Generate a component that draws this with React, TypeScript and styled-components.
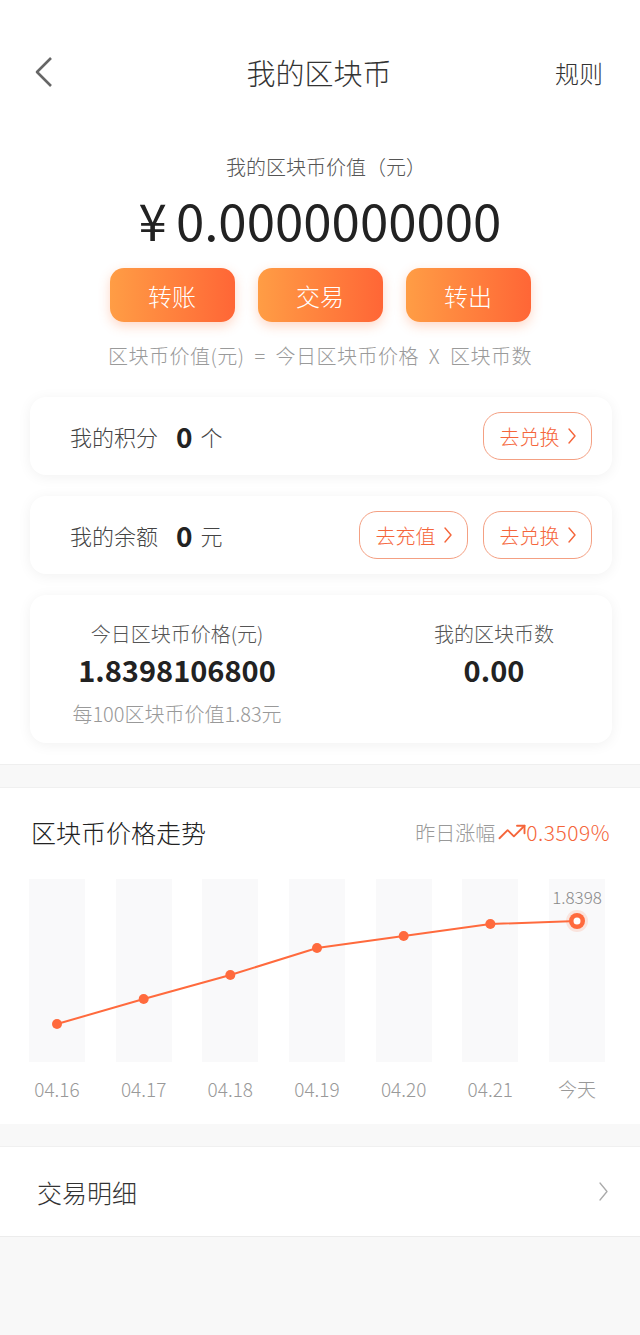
import React from "react";
import styled, { createGlobalStyle } from "styled-components";
import { TrendingUp } from "lucide-react";

const GlobalStyle = createGlobalStyle`
  html, body {
    margin: 0;
    padding: 0;
  }
  body {
    font-family: "Noto Sans CJK SC", "Noto Sans", sans-serif;
    font-weight: 300;
    background: #f8f8f8;
  }
  * {
    box-sizing: border-box;
  }
`;

const ORANGE = "#f5653a";

const points = [145, 120, 96, 69, 57, 45, 42];
const dates = ["04.16", "04.17", "04.18", "04.19", "04.20", "04.21", "今天"];
const PITCH = 86.67;

const Page = styled.div`
  width: 640px;
  min-height: 1335px;
  background: #f8f8f8;
`;

const TopArea = styled.div`
  background: #fff;
  padding-bottom: 21px;
  border-bottom: 1px solid #efefef;
`;

const NavBar = styled.header`
  height: 144px;
  display: grid;
  grid-template-columns: 1fr auto 1fr;
  align-items: center;
  padding: 0 37px 0 35px;
`;

const Title = styled.h1`
  margin: 0;
  font-size: 29px;
  font-weight: 300;
  color: #333;
`;

const RuleLink = styled.span`
  justify-self: end;
  font-size: 24px;
  color: #333;
`;

const Summary = styled.section`
  display: flex;
  flex-direction: column;
  align-items: center;
  padding-top: 9px;
`;

const ValueLabel = styled.div`
  font-size: 20px;
  line-height: 28px;
  color: #555;
  margin-left: 12px;
`;

const Amount = styled.div`
  margin-top: 8px;
  font-size: 51px;
  font-weight: 400;
  line-height: 60px;
  color: #222;
  display: flex;
  align-items: center;

  span {
    margin-right: 9px;
  }
`;

const ActionRow = styled.div`
  display: flex;
  gap: 23px;
  margin-top: 19px;
`;

const ActionButton = styled.button`
  width: 125px;
  height: 54px;
  border: none;
  border-radius: 14px;
  background: linear-gradient(90deg, #ff9d45, #ff6636);
  box-shadow: 0 4px 12px rgba(255, 110, 50, 0.28);
  color: #fff;
  font-family: inherit;
  font-weight: 300;
  font-size: 24px;
  padding: 0;
`;

const Formula = styled.div`
  margin-top: 20px;
  font-size: 20px;
  line-height: 28px;
  letter-spacing: 0.5px;
  color: #9a9a9a;
`;

const Cards = styled.div`
  display: flex;
  flex-direction: column;
  gap: 21px;
  margin: 27px 28px 0 30px;
`;

const Card = styled.div`
  background: #fff;
  border-radius: 16px;
  box-shadow: 0 2px 14px rgba(0, 0, 0, 0.06);
`;

const InfoCard = styled(Card)`
  height: 78px;
  display: flex;
  align-items: center;
  justify-content: space-between;
  padding: 0 20px 0 40px;
`;

const InfoLabel = styled.div`
  display: flex;
  align-items: center;
  font-size: 22px;
  color: #444;

  strong {
    font-size: 28px;
    font-weight: 700;
    color: #222;
    margin: 0 8px 0 18px;
    line-height: 1;
  }
`;

const PillGroup = styled.div`
  display: flex;
  gap: 15px;
`;

const Pill = styled.button`
  height: 48px;
  width: 109px;
  display: flex;
  align-items: center;
  justify-content: center;
  gap: 8px;
  border: 1px solid #f4a083;
  border-radius: 18px;
  background: #fff;
  color: ${ORANGE};
  font-family: inherit;
  font-weight: 300;
  font-size: 20px;
  padding: 0;
`;

const StatsCard = styled(Card)`
  display: grid;
  grid-template-columns: 294px 1fr;
  padding: 25px 0 16px;
`;

const StatCol = styled.div<{ $offset?: number }>`
  display: flex;
  flex-direction: column;
  align-items: center;
  padding-left: ${(p) => p.$offset ?? 0}px;
`;

const StatLabel = styled.div`
  font-size: 20px;
  line-height: 28px;
  color: #555;
`;

const StatValue = styled.div`
  margin-top: 2px;
  font-size: 29px;
  line-height: 38px;
  font-weight: 700;
  color: #222;
`;

const StatNote = styled.div`
  margin-top: 13px;
  font-size: 20px;
  line-height: 26px;
  color: #999;
`;

const ChartSection = styled.section`
  margin-top: 22px;
  background: #fff;
  border-top: 1px solid #f0f0f0;
  padding: 27px 30px 22px 29px;
`;

const ChartHead = styled.div`
  display: flex;
  align-items: center;
  justify-content: space-between;
`;

const ChartTitle = styled.h2`
  margin: 0 0 0 2px;
  font-size: 25px;
  line-height: 34px;
  font-weight: 300;
  color: #222;
`;

const Change = styled.div`
  display: flex;
  align-items: center;
  font-size: 20px;
  color: #999;

  svg {
    margin: 0 -1px 0 2px;
  }

  b {
    font-weight: 300;
    font-size: 21px;
    letter-spacing: 0.5px;
    color: ${ORANGE};
  }
`;

const Plot = styled.div`
  position: relative;
  margin: 30px 5px 0 0;
  height: 183px;
  display: flex;
  justify-content: space-between;
`;

const Bar = styled.div`
  width: 56px;
  height: 100%;
  background: #f9f9fa;
`;

const Overlay = styled.svg`
  position: absolute;
  left: 0;
  top: 0;
`;

const PeakLabel = styled.span`
  position: absolute;
  top: 8px;
  transform: translateX(-50%);
  font-size: 17px;
  line-height: 20px;
  color: #888;
`;

const Axis = styled.div`
  display: flex;
  justify-content: space-between;
  margin: 14px 5px 0 0;
`;

const AxisLabel = styled.span`
  width: 56px;
  text-align: center;
  font-size: 19px;
  line-height: 26px;
  color: #999;
  white-space: nowrap;
`;

const DetailRow = styled.div`
  margin-top: 22px;
  height: 91px;
  background: #fff;
  border-top: 1px solid #f0f0f0;
  border-bottom: 1px solid #ececec;
  display: flex;
  align-items: center;
  justify-content: space-between;
  padding: 0 32px 0 37px;
  font-size: 25px;
  color: #333;
`;

function Chevron({ color, w, h, sw }: { color: string; w: number; h: number; sw: number }) {
  return (
    <svg width={w} height={h} viewBox={`0 0 ${w} ${h}`} fill="none">
      <polyline
        points={`1,1 ${w - 1},${h / 2} 1,${h - 1}`}
        stroke={color}
        strokeWidth={sw}
        strokeLinecap="round"
        strokeLinejoin="round"
      />
    </svg>
  );
}

export default function App() {
  const coords = points.map((y, i) => [28 + i * PITCH, y]);
  const last = coords[coords.length - 1];

  return (
    <Page>
      <GlobalStyle />
      <TopArea>
        <NavBar>
          <svg width="18" height="32" viewBox="0 0 18 32" fill="none">
            <polyline points="16,2 2,16 16,30" stroke="#666" strokeWidth="2.6" strokeLinejoin="round" />
          </svg>
          <Title>我的区块币</Title>
          <RuleLink>规则</RuleLink>
        </NavBar>

        <Summary>
          <ValueLabel>我的区块币价值（元）</ValueLabel>
          <Amount>
            <span>¥</span>0.0000000000
          </Amount>
          <ActionRow>
            <ActionButton>转账</ActionButton>
            <ActionButton>交易</ActionButton>
            <ActionButton>转出</ActionButton>
          </ActionRow>
          <Formula>区块币价值(元) &nbsp;=&nbsp; 今日区块币价格 &nbsp;X&nbsp; 区块币数</Formula>
        </Summary>

        <Cards>
          <InfoCard>
            <InfoLabel>
              我的积分<strong>0</strong>个
            </InfoLabel>
            <PillGroup>
              <Pill>
                去兑换
                <Chevron color={ORANGE} w={8} h={16} sw={1.4} />
              </Pill>
            </PillGroup>
          </InfoCard>
          <InfoCard>
            <InfoLabel>
              我的余额<strong>0</strong>元
            </InfoLabel>
            <PillGroup>
              <Pill>
                去充值
                <Chevron color={ORANGE} w={8} h={16} sw={1.4} />
              </Pill>
              <Pill>
                去兑换
                <Chevron color={ORANGE} w={8} h={16} sw={1.4} />
              </Pill>
            </PillGroup>
          </InfoCard>
          <StatsCard>
            <StatCol>
              <StatLabel>今日区块币价格(元)</StatLabel>
              <StatValue>1.8398106800</StatValue>
              <StatNote>每100区块币价值1.83元</StatNote>
            </StatCol>
            <StatCol $offset={52}>
              <StatLabel>我的区块币数</StatLabel>
              <StatValue>0.00</StatValue>
            </StatCol>
          </StatsCard>
        </Cards>
      </TopArea>

      <ChartSection>
        <ChartHead>
          <ChartTitle>区块币价格走势</ChartTitle>
          <Change>
            昨日涨幅
            <TrendingUp size={30} strokeWidth={1.5} color={ORANGE} />
            <b>0.3509%</b>
          </Change>
        </ChartHead>
        <Plot>
          {dates.map((d) => (
            <Bar key={d} />
          ))}
          <Overlay width="576" height="183" viewBox="0 0 576 183">
            <polyline
              points={coords.map(([x, y]) => `${x},${y}`).join(" ")}
              fill="none"
              stroke="#ff6a3d"
              strokeWidth="2"
            />
            {coords.slice(0, -1).map(([x, y]) => (
              <circle key={x} cx={x} cy={y} r="5" fill="#ff6a3d" />
            ))}
            <circle cx={last[0]} cy={last[1]} r="11" fill="rgba(255,106,61,0.15)" />
            <circle cx={last[0]} cy={last[1]} r="8" fill="#ff6a3d" />
            <circle cx={last[0]} cy={last[1]} r="3.5" fill="#fff" />
          </Overlay>
          <PeakLabel style={{ left: last[0] }}>1.8398</PeakLabel>
        </Plot>
        <Axis>
          {dates.map((d) => (
            <AxisLabel key={d}>{d}</AxisLabel>
          ))}
        </Axis>
      </ChartSection>

      <DetailRow>
        交易明细
        <Chevron color="#aaa" w={9} h={19} sw={1.3} />
      </DetailRow>
    </Page>
  );
}
